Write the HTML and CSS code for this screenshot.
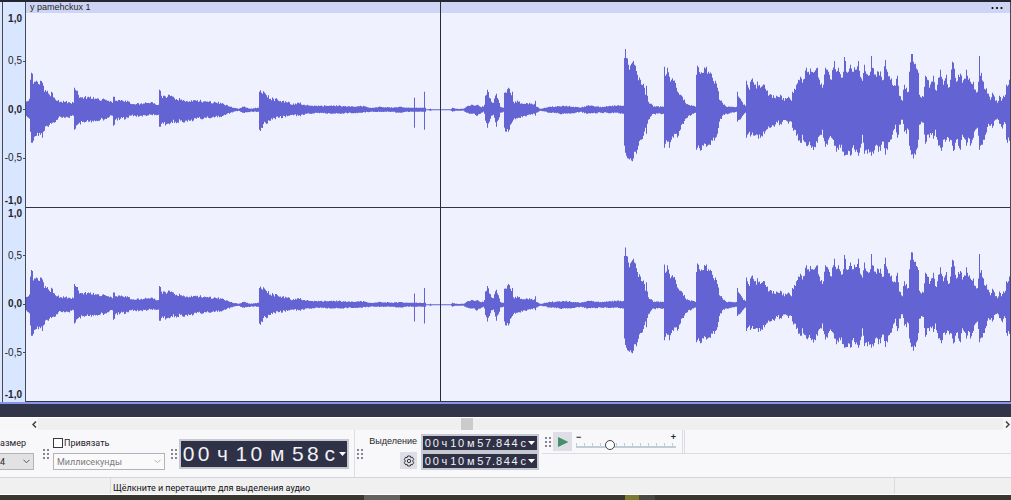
FILE: index.html
```html
<!DOCTYPE html>
<html lang="ru">
<head>
    <meta charset="utf-8">
    <title>Аудиоредактор</title>
    <link rel="stylesheet" href="styles.css">
</head>
<body>
    <!-- Track with two channels -->
    <main class="track">
        <div class="rulers">
            <div class="ruler">
                <span class="end">1,0</span>
                <span>0,5</span>
                <span class="zero">0,0</span>
                <span>-0,5</span>
                <span class="end bottom">-1,0</span>
            </div>
            <div class="ruler">
                <span class="end">1,0</span>
                <span>0,5</span>
                <span class="zero">0,0</span>
                <span>-0,5</span>
                <span class="end bottom">-1,0</span>
            </div>
        </div>
        <div class="clip">
            <div class="clip-header">
                <span>y pamehckux 1</span>
                <button class="clip-menu" aria-label="Меню клипа">
                    <svg width="12" height="4" viewBox="0 0 12 4"><circle cx="1.5" cy="2" r="1.1"/><circle cx="6" cy="2" r="1.1"/><circle cx="10.5" cy="2" r="1.1"/></svg>
                </button>
            </div>
            <svg class="channel" viewBox="26 -97 984 194" preserveAspectRatio="none"><path class="wave" data-gain="1"/></svg>
            <svg class="channel" viewBox="26 -97 984 194" preserveAspectRatio="none"><path class="wave" data-gain="0.94"/></svg>
            <div class="cursor"></div>
        </div>
    </main>
    <div class="track-space"></div>

    <!-- Horizontal scroll -->
    <div class="scrollbar">
        <button aria-label="Влево"><svg width="5" height="7" viewBox="0 0 5 7"><path d="M4 .5 1 3.5l3 3"/></svg></button>
        <div class="scroll-track"><div class="scroll-thumb"></div></div>
        <button aria-label="Вправо"><svg width="5" height="7" viewBox="0 0 5 7"><path d="m1 .5 3 3-3 3"/></svg></button>
    </div>

    <!-- Toolbars -->
    <div class="toolbars">
        <div class="group signature">
            <label for="beats">азмер</label>
            <span class="select-wrap">
                <select id="beats"><option>4</option></select>
                <svg width="7" height="5" viewBox="0 0 7 5"><path d="m.5.8 3 3 3-3"/></svg>
            </span>
        </div>
        <div class="grip"></div>
        <div class="group snap">
            <label class="check"><input type="checkbox">Привязать</label>
            <span class="select-wrap disabled">
                <select aria-label="Единицы привязки" disabled><option>Миллисекунды</option></select>
                <svg width="7" height="5" viewBox="0 0 7 5"><path d="m.5.8 3 3 3-3"/></svg>
            </span>
        </div>
        <div class="grip"></div>
        <div class="time big">
            <b>0</b><b>0</b><i>ч</i><b>1</b><b>0</b><i>м</i><b>5</b><b>8</b><i>с</i>
            <button aria-label="Формат времени"><svg width="7" height="4" viewBox="0 0 7 4"><path d="M0 0h7L3.500 4z"/></svg></button>
        </div>
        <div class="selection">
            <div class="grip"></div>
            <div class="selection-side">
                <span>Выделение</span>
                <button class="gear" aria-label="Настройки выделения">
                    <svg width="12" height="12" viewBox="0 0 12 12"><path d="M4.700 1h2.600l.5 1.600 1.600-.4 1.300 2.200L9.600 6l1.100 1.600-1.300 2.200-1.600-.4-.5 1.600H4.700l-.5-1.600-1.600.4-1.300-2.200L2.400 6 1.300 4.400l1.300-2.200 1.600.4z"/><circle cx="6" cy="6" r="1.700"/></svg>
                </button>
            </div>
            <div class="selection-times">
                <div class="time">
                    <b>0</b><b>0</b><i>ч</i><b>1</b><b>0</b><i>м</i><b>5</b><b>7</b><u>.</u><b>8</b><b>4</b><b>4</b><i>с</i>
                    <button aria-label="Формат начала"><svg width="7" height="4" viewBox="0 0 7 4"><path d="M0 0h7L3.500 4z"/></svg></button>
                </div>
                <div class="time">
                    <b>0</b><b>0</b><i>ч</i><b>1</b><b>0</b><i>м</i><b>5</b><b>7</b><u>.</u><b>8</b><b>4</b><b>4</b><i>с</i>
                    <button aria-label="Формат конца"><svg width="7" height="4" viewBox="0 0 7 4"><path d="M0 0h7L3.500 4z"/></svg></button>
                </div>
            </div>
        </div>
        <div class="right">
            <div class="speed">
                <div class="grip"></div>
                <button class="play" aria-label="Воспроизвести на скорости"><svg width="12" height="12" viewBox="0 0 12 12"><path d="M1 1l10.500 5L1 11z"/></svg></button>
                <div class="slider">
                    <div class="signs"><span>−</span><span>+</span></div>
                    <input type="range" min="0" max="100" value="32" aria-label="Скорость воспроизведения">
                </div>
            </div>
        </div>
    </div>

    <footer class="status">
        <span class="message">Щёлкните и перетащите для выделения аудио</span>
        <span class="rate"></span>
    </footer>
    <div class="taskbar"><span class="item"></span><span class="item olive"></span><span class="item dim"></span></div>

    <script src="wave.js"></script>
</body>
</html>
```
FILE: styles.css
```css
* {
    box-sizing: border-box;
}
body {
    margin: 0;
    height: 100vh;
    display: flex;
    flex-direction: column;
    overflow: hidden;
    font-family: "Liberation Sans", Arial, sans-serif;
    font-size: 9px;
    color: #25252b;
    background: #f7f7fa;
}
button {
    border: 0;
    padding: 0;
    background: none;
    display: flex;
    align-items: center;
    justify-content: center;
}
svg {
    display: block;
}

/* Track */
.track {
    flex: 1;
    min-height: 0;
    display: flex;
    padding-left: 2px;
    background: #dce6f8;
    border-top: 2px solid #25252f;
    border-bottom: 2px solid #8796e8;
}
.rulers {
    width: 24px;
    display: flex;
    flex-direction: column;
    padding-top: 11px;
    background: #d9e6ff;
    border-left: 1px solid #454a58;
    border-right: 1px solid #454a58;
}
.ruler {
    flex: 1;
    display: grid;
    grid-template-rows: 1fr 2fr 2fr 2fr 1fr;
    align-items: center;
    padding-bottom: 1px;
    font-size: 10px;
    line-height: 12px;
}
.ruler span {
    display: flex;
    align-items: center;
    justify-content: flex-end;
    padding-right: 1px;
}
.ruler span::after {
    content: "";
    width: 2px;
    height: 1px;
    margin-left: 1px;
    margin-right: -1px;
    background: #454a58;
}
.ruler .end, .ruler .zero {
    font-weight: bold;
}
.ruler .end {
    align-self: start;
}
.ruler .bottom {
    align-self: end;
}
.ruler .end::after {
    background: none;
}
.clip {
    flex: 1;
    min-width: 0;
    display: flex;
    flex-direction: column;
    position: relative;
    background: #eff1ff;
    border-right: 1px solid #454a58;
}
.clip-header {
    height: 11px;
    display: flex;
    justify-content: space-between;
    align-items: center;
    padding: 0 7px 0 4px;
    background: #ced5f4;
    line-height: 11px;
}
.clip-menu {
    width: 12px;
    height: 11px;
}
.channel {
    flex: 1;
    min-height: 0;
    width: 100%;
    border-bottom: 1px solid #35353f;
}
.wave {
    fill: #6363d3;
}
/* Play position, lies over both channels */
.cursor {
    position: absolute;
    top: 0;
    bottom: 1px;
    left: 42.1%;
    width: 1px;
    background: #2b2b33;
}
.track-space {
    height: 13px;
    background: #32354a;
}

/* Scroll */
.scrollbar {
    height: 13px;
    display: flex;
    padding-left: 30px;
    background: #f7f7f9;
    border-top: 1px solid #ffffff;
}
.scrollbar button {
    width: 8px;
    flex: none;
}
.scrollbar path {
    fill: none;
    stroke: #404040;
    stroke-width: 1.500;
}
.scroll-track {
    flex: 1;
    background: #efefef;
}
.scroll-thumb {
    width: 12px;
    height: 12px;
    margin-left: 43.8%;
    background: #cbcbcb;
}

/* Toolbars */
.toolbars {
    height: 48px;
    display: flex;
    background: #f8f8fb;
    border-bottom: 1px solid #d4d4da;
}
.group {
    display: flex;
    flex-direction: column;
    gap: 4px;
    padding-top: 7px;
    font-family: Roboto, sans-serif;
}
.group label {
    height: 12px;
    line-height: 12px;
}
.signature {
    width: 34px;
}
.snap {
    width: 112px;
}
.check {
    display: flex;
    align-items: center;
    gap: 1px;
}
.check input {
    appearance: none;
    width: 10px;
    height: 10px;
    margin: 0;
    border: 1px solid #3a3a3e;
    background: #ffffff;
}
.select-wrap {
    display: grid;
    align-items: center;
    height: 17px;
}
.select-wrap select {
    grid-area: 1 / 1;
    appearance: none;
    width: 100%;
    height: 17px;
    padding: 0 3px;
    border: 1px solid #b4b4b8;
    border-radius: 0;
    background: #e2e2e4;
    color: #25252b;
    font: inherit;
}
.signature select {
    padding-left: 0;
    border-left: 0;
}
.select-wrap svg {
    grid-area: 1 / 1;
    justify-self: end;
    margin-right: 4px;
    pointer-events: none;
}
.select-wrap path {
    fill: none;
    stroke: #55555a;
}
.select-wrap.disabled select {
    background: #fafafa;
    border-color: #b4b4b8;
    color: #7b7b80;
    opacity: 1;
}
.select-wrap.disabled path {
    stroke: #b0b0b4;
}
.grip {
    width: 6px;
    height: 10px;
    flex: none;
    align-self: center;
    margin: 0 4px 0 9px;
    background: radial-gradient(circle at 1px 1px, #85858f 1px, transparent 1px) 0 0 / 4px 4px;
}
.snap + .grip {
    margin: 0 2px 0 6px;
}
.time {
    display: flex;
    align-items: center;
    height: 18px;
    padding: 0 2px 0 1px;
    border: 2px solid #c8c9d0;
    background: #2f3147;
    color: #f2f2f6;
    font-size: 11px;
    line-height: 14px;
}
.time b, .time i, .time u {
    font-weight: normal;
    font-style: normal;
    text-decoration: none;
    text-align: center;
}
.time b {
    width: 8px;
}
.time i {
    padding: 0 2px;
}
.time button {
    margin-left: auto;
}
.time path {
    fill: #ffffff;
}
.time.big {
    align-self: center;
    width: 170px;
    height: 30px;
    margin: 0 5px 0 0;
    padding: 0 1px 0 0;
    font-size: 21px;
    line-height: 26px;
}
.big b {
    width: 15px;
}
.big i {
    padding: 0 6px;
}
.big i:last-of-type {
    padding: 0 0 0 4px;
}
.selection {
    display: flex;
    border-left: 1px solid #dcdce2;
    width: 188px;
}
.selection .grip {
    margin: 0 4px 0 2px;
}
.selection-side {
    width: 50px;
    display: flex;
    flex-direction: column;
    align-items: flex-end;
    gap: 5px;
    padding-top: 5px;
    line-height: 12px;
}
.gear {
    width: 17px;
    height: 17px;
    background: #dedfe6;
}
.gear path, .gear circle {
    fill: none;
    stroke: #35353c;
}
.selection-times {
    width: 118px;
    margin-left: 4px;
    padding-top: 4px;
}
.right {
    flex: 1;
}
.speed {
    display: flex;
    align-items: center;
    height: 24px;
    border-bottom: 1px solid #dcdce2;
}
.speed .grip {
    margin: 0 2px 0 3px;
}
.play {
    width: 19px;
    height: 19px;
    background: #dedfe6;
}
.play path {
    fill: #43906a;
}
.slider {
    display: flex;
    flex-direction: column;
    width: 113px;
    height: 24px;
    padding: 3px 6px 0 4px;
    border-right: 3px double #dcdce2;
}
.signs {
    display: flex;
    justify-content: space-between;
    height: 7px;
    line-height: 9px;
    font-weight: bold;
}
.slider input {
    appearance: none;
    width: 100%;
    height: 11px;
    margin: 0;
    background:
        linear-gradient(#c0cdd6, #c0cdd6) 0 6px / 100% 2px no-repeat,
        repeating-linear-gradient(90deg, #c0cdd6 0 1px, transparent 1px 8px) 0 3px / 100% 3px no-repeat;
}
.slider input::-webkit-slider-thumb {
    appearance: none;
    width: 10px;
    height: 10px;
    border: 1px solid #44444c;
    border-radius: 50%;
    background: #ffffff;
}

/* Status bar */
.status {
    height: 17px;
    display: flex;
    padding-left: 110px;
    background: #f0f0f0;
    border-bottom: 1px solid #ffffff;
    color: #101014;
    font-family: Roboto, sans-serif;
    line-height: 20px;
}
.message {
    flex: 1;
    padding-left: 2px;
    border-left: 1px solid #dcdcdc;
}
.rate {
    width: 117px;
    border-left: 1px solid #dcdcdc;
}
.taskbar {
    height: 5px;
    display: flex;
    padding-left: 36%;
    background: #38362f;
}
.item {
    width: 36px;
    background: #62615c;
}
.item.olive {
    width: 14px;
    margin-left: 225px;
    background: #7c7a30;
}
.item.dim {
    width: 16px;
    background: #494742;
}
```
FILE: wave.js
```javascript
// Envelope of the clip: position, level above zero, level below zero
const envelope = [
    25,7,7, 28,9,8, 29,11,9, 30,30,22, 31,37,33, 32,36,33, 33,26,31, 34,28,27, 36,29,26, 40,29,25, 42,27,28, 43,24,22, 44,18,21,
    46,18,16, 49,15,15, 52,17,13, 54,12,13, 57,9,10, 60,8,7, 65,8,8, 73,7,6, 74,22,20, 75,20,19, 77,19,15, 79,12,13, 83,11,12,
    88,13,12, 92,11,11, 96,11,11, 100,9,10, 105,10,9, 109,8,7, 112,7,6, 113,13,16, 114,13,15, 115,9,10, 120,9,9, 127,9,8,
    130,6,6, 140,6,6, 150,7,5, 158,5,5, 159,20,17, 160,19,17, 161,14,14, 163,14,14, 167,13,14, 171,14,12, 175,10,12, 180,10,11,
    185,8,11, 190,8,11, 196,9,9, 206,8,8, 213,7,7, 220,7,7, 224,5,5, 230,3,3, 238,1,1, 243,3,3, 250,1,2, 257,2,2, 258,2,2,
    259,18,20, 261,17,18, 265,16,13, 270,11,11, 273,11,8, 278,9,8, 288,8,6, 292,5,5, 298,7,6, 304,5,5, 310,4,4, 320,4,3,
    330,4,4, 340,4,4, 350,3,3, 360,4,3, 370,2,2, 380,3,2, 392,2,2, 400,3,3, 405,2,2, 413,2,2, 414,12,18, 415,2,2, 423,2,2,
    424,18,20, 425,2,2, 426,0,0, 430,1,1, 434,0,0, 449,0,0, 452,2,2, 455,1,1, 463,1,1, 466,3,3, 471,5,4, 474,4,4, 477,5,6,
    480,3,4, 483,3,2, 484,5,4, 485,14,11, 487,20,18, 489,12,12, 491,8,6, 493,7,5, 496,16,17, 498,10,10, 500,3,3, 503,2,2,
    504,17,18, 506,17,22, 508,22,22, 510,17,15, 512,18,12, 513,8,10, 518,8,8, 524,6,6, 530,6,5, 534,6,4, 535,9,6, 536,3,3,
    540,1,1, 550,3,3, 562,4,4, 575,3,3, 580,2,2, 587,4,4, 600,3,3, 615,4,3, 623,4,4, 624,52,36, 625,61,43, 626,52,46, 628,45,49,
    629,40,50, 631,46,51, 633,49,49, 635,44,42, 637,35,40, 640,30,30, 643,26,26, 645,15,18, 646,24,24, 647,14,14, 648,8,10,
    651,6,6, 653,3,4, 663,3,4, 664,43,38, 665,34,34, 667,42,32, 669,33,38, 671,30,30, 673,29,28, 676,22,24, 678,17,26, 680,15,20,
    682,13,14, 685,7,9, 688,5,6, 693,4,4, 695,3,3, 696,35,40, 697,44,38, 700,36,41, 703,37,36, 706,43,37, 707,36,36, 712,32,31,
    715,29,28, 717,22,24, 719,10,12, 722,7,6, 726,3,4, 736,3,2, 737,18,12, 739,12,10, 741,9,8, 743,5,5, 745,4,3, 746,29,28,
    747,25,25, 749,20,22, 751,30,25, 754,25,26, 758,24,29, 760,22,28, 764,25,24, 766,19,20, 769,15,18, 774,12,17, 776,14,12,
    780,15,14, 782,10,12, 786,11,11, 788,13,14, 791,9,12, 792,18,18, 794,21,20, 796,25,26, 798,30,31, 800,33,33, 802,27,25,
    804,31,32, 806,42,36, 808,38,35, 811,38,38, 814,38,37, 817,42,33, 820,25,25, 822,22,20, 823,25,28, 825,42,37, 828,38,30,
    831,30,28, 834,49,36, 836,38,42, 838,42,40, 841,32,35, 843,38,42, 844,53,46, 846,38,45, 848,38,41, 850,45,46, 852,38,38,
    855,40,42, 858,49,46, 860,33,38, 862,29,25, 864,45,44, 866,36,40, 870,38,42, 871,54,46, 872,42,42, 876,33,35, 878,38,42,
    881,33,35, 883,30,32, 885,50,45, 887,38,40, 890,30,30, 892,25,25, 895,24,15, 897,34,28, 898,24,25, 899,14,15, 901,10,10,
    902,9,10, 904,25,22, 906,22,24, 908,18,20, 909,38,36, 911,56,45, 913,48,49, 915,46,45, 917,40,38, 918,37,30, 919,15,15,
    921,12,12, 923,13,13, 925,34,34, 927,30,25, 929,22,28, 931,28,25, 933,34,29, 935,20,20, 937,25,30, 940,40,38, 941,33,41,
    943,25,30, 946,35,30, 948,22,28, 950,30,30, 952,48,36, 954,41,40, 956,28,30, 958,35,36, 960,36,40, 962,27,25, 965,31,30,
    966,40,36, 968,30,28, 970,28,36, 973,28,28, 975,20,20, 977,18,18, 978,28,26, 979,54,40, 980,34,36, 981,37,35, 983,28,30,
    985,20,25, 988,16,14, 990,10,16, 992,17,18, 995,9,10, 997,7,9, 999,14,14, 1001,9,17, 1003,14,15, 1005,15,14, 1006,25,30,
    1009,30,31, 1011,30,31
];

// Same ripple on every load
function ripple(x, seed) {
    const n = Math.sin(x * 12.9898 + seed) * 43758.5453;
    return n - Math.floor(n) - 0.5;
}

function columns() {
    const list = [];
    for (let i = 0; i < envelope.length - 3; i += 3) {
        const [x0, up0, down0, x1, up1, down1] = envelope.slice(i, i + 6);
        for (let x = x0; x < x1; x++) {
            const t = (x - x0) / (x1 - x0);
            const up = up0 + (up1 - up0) * t;
            const down = down0 + (down1 - down0) * t;
            const edge = x === x0 ? 0 : 1;
            list.push([
                x,
                Math.max(0.5, up + ripple(x, 1) * edge * Math.min(8, up * 0.35)),
                Math.max(0.5, down + ripple(x, 7) * edge * Math.min(8, down * 0.35))
            ]);
        }
    }
    return list;
}

const cols = columns();
document.querySelectorAll('.wave').forEach(path => {
    const gain = Number(path.dataset.gain);
    let d = 'M25 0';
    cols.forEach(([x, up]) => {
        d += `V${(-up * gain).toFixed(1)}H${x + 1}`;
    });
    cols.slice().reverse().forEach(([x, up, down]) => {
        d += `V${(down * gain).toFixed(1)}H${x}`;
    });
    path.setAttribute('d', d + 'Z');
});
```
